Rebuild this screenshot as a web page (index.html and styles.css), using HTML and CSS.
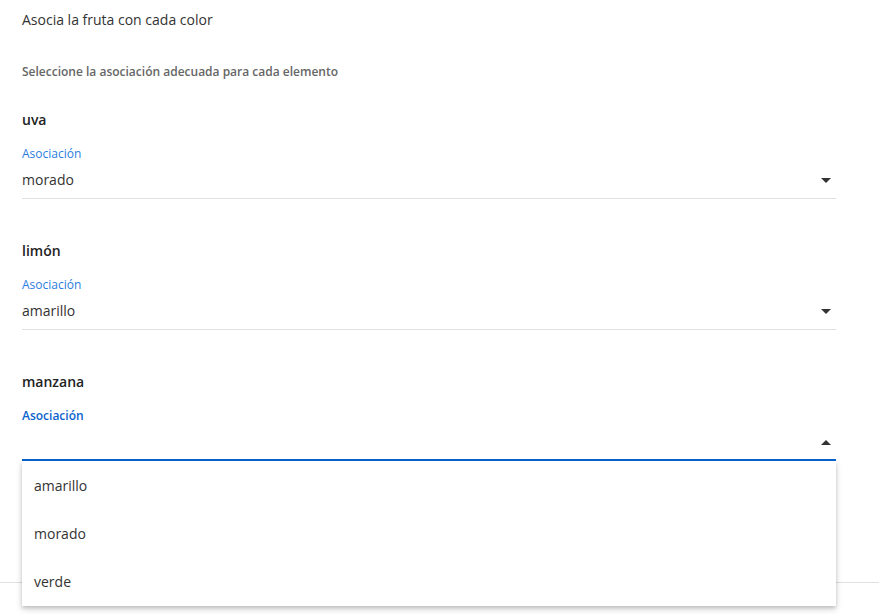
FILE: index.html
```html
<!DOCTYPE html>
<html lang="es">
<head>
<meta charset="utf-8">
<title>Asocia la fruta con cada color</title>
<link rel="stylesheet" href="styles.css">
</head>
<body>
<main class="page">
  <h1 class="title">Asocia la fruta con cada color</h1>
  <p class="subtitle">Seleccione la asociación adecuada para cada elemento</p>

  <section class="item">
    <h2 class="item-name">uva</h2>
    <div class="field">
      <span class="field-label">Asociación</span>
      <div class="select">
        <span class="select-value">morado</span>
        <svg class="arrow" viewBox="0 0 10 5" width="10" height="5"><path d="M0 0l5 5 5-5z"/></svg>
      </div>
    </div>
  </section>

  <section class="item">
    <h2 class="item-name">limón</h2>
    <div class="field">
      <span class="field-label">Asociación</span>
      <div class="select">
        <span class="select-value">amarillo</span>
        <svg class="arrow" viewBox="0 0 10 5" width="10" height="5"><path d="M0 0l5 5 5-5z"/></svg>
      </div>
    </div>
  </section>

  <section class="item">
    <h2 class="item-name">manzana</h2>
    <div class="field field-open">
      <span class="field-label">Asociación</span>
      <div class="select select-focused">
        <span class="select-value"></span>
        <svg class="arrow" viewBox="0 0 10 5" width="10" height="5"><path d="M0 5l5-5 5 5z"/></svg>
      </div>
      <ul class="menu">
        <li class="menu-item">amarillo</li>
        <li class="menu-item">morado</li>
        <li class="menu-item">verde</li>
      </ul>
    </div>
  </section>
</main>
<footer class="footer"></footer>
</body>
</html>
```

FILE: styles.css
```css
html, body {
  margin: 0;
  padding: 0;
  background: #ffffff;
}

body {
  font-family: "Open Sans", "Noto Sans", "Liberation Sans", sans-serif;
  color: #333333;
  width: 879px;
  height: 614px;
  overflow: hidden;
}

.page {
  padding: 10px 43px 0 22px;
}

.title {
  margin: 0;
  font-size: 14px;
  line-height: 20px;
  font-weight: 400;
  color: #333333;
}

.subtitle {
  margin: 34px 0 0;
  font-size: 12px;
  line-height: 16px;
  font-weight: 600;
  color: #666666;
}

.item {
  margin-top: 30px;
}

.item + .item {
  margin-top: 42px;
}

.item-name {
  margin: 0;
  font-size: 14px;
  line-height: 20px;
  font-weight: 600;
  color: #222222;
}

.field {
  position: relative;
  margin-top: 16px;
}

.field-label {
  display: block;
  font-size: 12px;
  line-height: 16px;
  color: #2b7de0;
}

.field-open .field-label {
  color: #0a63cc;
  font-weight: 600;
}

.select {
  display: flex;
  align-items: center;
  justify-content: space-between;
  height: 20px;
  padding: 8px 0 8px;
  border-bottom: 1px solid #e0e0e0;
}

.select-value {
  font-size: 14px;
  line-height: 20px;
  color: #333333;
}

.select-focused {
  padding-bottom: 7px;
  border-bottom: 2px solid #0a63cc;
}

.arrow {
  display: block;
  margin-right: 5px;
  fill: #333333;
}

.menu {
  position: absolute;
  top: 100%;
  left: 0;
  right: 0;
  margin: 0;
  padding: 1px 0 0;
  list-style: none;
  background: #ffffff;
  box-shadow: 0 2px 4px rgba(0, 0, 0, 0.2), 0 4px 8px rgba(0, 0, 0, 0.1);
  z-index: 10;
}

.menu-item {
  height: 48px;
  line-height: 48px;
  padding: 0 12px;
  font-size: 14px;
  color: #333333;
}

.footer {
  margin-top: 121px;
  border-top: 1px solid #e0e0e0;
}
```
